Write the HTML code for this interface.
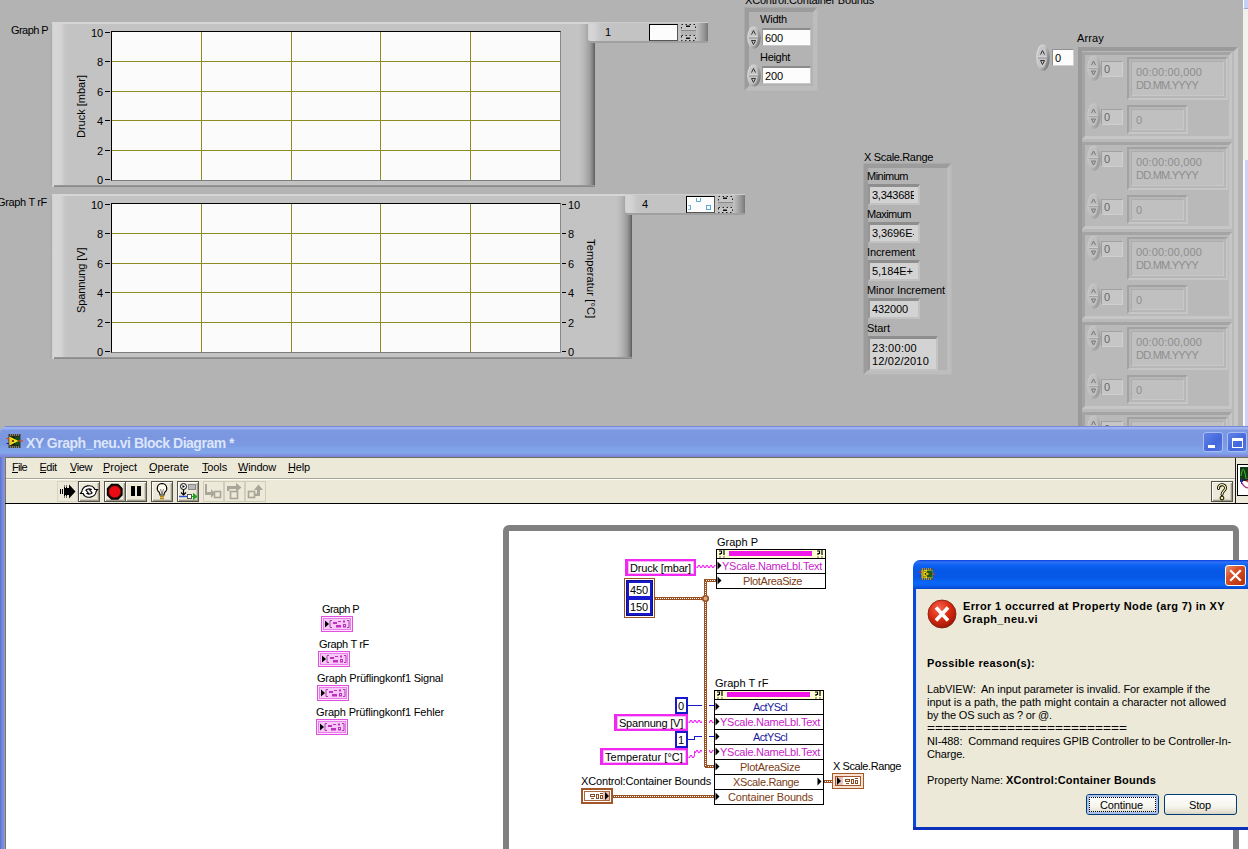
<!DOCTYPE html>
<html><head><meta charset="utf-8"><title>XY Graph_neu.vi</title>
<style>
html,body{margin:0;padding:0}
body{width:1248px;height:849px;overflow:hidden;background:#b3b3b3;position:relative;font-family:"Liberation Sans",sans-serif;font-size:11px}
div{position:absolute;box-sizing:border-box}
svg{position:absolute;overflow:visible}
.t{white-space:pre}

.gframe{background:linear-gradient(90deg,#d0d0d0 0,#d6d6d6 2px,#d4d4d4 9px,#c6c6c6 13px,#c3c3c3 16px,#c3c3c3 calc(100% - 16px),#b8b8b8 calc(100% - 11px),#9c9c9c calc(100% - 5px),#7c7c7c calc(100% - 2px),#5a5a5a 100%)}
.gframe:before{content:"";position:absolute;left:0;right:0;top:0;height:2px;background:#d6d6d6}
.gframe:after{content:"";position:absolute;left:2px;right:0;bottom:0;height:2px;background:linear-gradient(180deg,#9c9c9c,#848484)}
.plot{background:#fbfbfb;border-left:1px solid #000;border-top:1px solid #000;border-right:1px solid #8a8a8a;border-bottom:1px solid #7c7c7c}
.gl{background:#8c8c22}
.leg{background:linear-gradient(90deg,#cfcfcf 0,#d6d6d6 2px,#d2d2d2 7px,#c6c6c6 12px,#c3c3c3 16px,#c3c3c3 calc(100% - 12px),#b4b4b4 calc(100% - 9px),#909090 calc(100% - 3px),#777 100%);border-top:1px solid #cecece;border-bottom:2px solid #a0a0a0;border-radius:0 0 0 3px}

.tbar{background:linear-gradient(180deg,#7888d4 0,#7888d4 1px,#9db4f4 1px,#9bb2f0 3px,#7d99e2 4px,#7a96df 14px,#7c9ae2 19px,#80a4e8 24px,#82a6ea 27px,#7f8fe0 29px,#7a86d8 31px);border-radius:7px 0 0 0}
.tbtn{border:1px solid #55534a;background:#ece9d8;box-shadow:inset 1px 1px 0 #fff,inset -1px -1px 0 #9d9a8c,inset -2px -2px 0 #d2cfc0}
.tbtn.dis{border-color:#d0cdbc;box-shadow:none}
.tbtn.flat{border-color:#d6d3c2;box-shadow:none}
.mn{font-size:11px;line-height:11px}
.mn u{text-decoration:none;border-bottom:1px solid #000}

.dlgtitle{background:linear-gradient(180deg,#0a3ce0 0,#2f72f4 2px,#0f62f4 5px,#0658e6 10px,#0557e6 17px,#0a68f8 23px,#0a5eec 26px,#0444cc 29px);border-radius:7px 0 0 0}
.xpbtn{border:1px solid #003c74;border-radius:3px;background:linear-gradient(180deg,#fff 0,#f6f5ee 60%,#e3dfd0 90%,#d6d0c5 100%)}
</style></head>
<body>
<div style="left:50px;top:24px;width:2px;height:162px;background:linear-gradient(90deg,#b0b0b0,#a9a9a9)"></div>
<div class="gframe" style="left:52px;top:22px;width:543px;height:165px;"></div>
<div class="plot" style="left:111px;top:31px;width:450px;height:150px;"></div>
<div class="gl" style="left:112px;top:61px;width:448px;height:1px;"></div>
<div class="gl" style="left:112px;top:91px;width:448px;height:1px;"></div>
<div class="gl" style="left:112px;top:120px;width:448px;height:1px;"></div>
<div class="gl" style="left:112px;top:150px;width:448px;height:1px;"></div>
<div class="gl" style="left:201px;top:32px;width:1px;height:148px;"></div>
<div class="gl" style="left:291px;top:32px;width:1px;height:148px;"></div>
<div class="gl" style="left:380px;top:32px;width:1px;height:148px;"></div>
<div class="gl" style="left:470px;top:32px;width:1px;height:148px;"></div>
<div style="left:105px;top:32px;width:5px;height:1px;background:#000;"></div>
<div class="t" style="right:1145px;top:27.5px;font-size:11px;line-height:11px;color:#000;letter-spacing:-0.125px;">10</div>
<div style="left:105px;top:61px;width:5px;height:1px;background:#000;"></div>
<div class="t" style="right:1145px;top:56.5px;font-size:11px;line-height:11px;color:#000;letter-spacing:-0.125px;">8</div>
<div style="left:105px;top:91px;width:5px;height:1px;background:#000;"></div>
<div class="t" style="right:1145px;top:86.5px;font-size:11px;line-height:11px;color:#000;letter-spacing:-0.125px;">6</div>
<div style="left:105px;top:120px;width:5px;height:1px;background:#000;"></div>
<div class="t" style="right:1145px;top:115.5px;font-size:11px;line-height:11px;color:#000;letter-spacing:-0.125px;">4</div>
<div style="left:105px;top:150px;width:5px;height:1px;background:#000;"></div>
<div class="t" style="right:1145px;top:145.5px;font-size:11px;line-height:11px;color:#000;letter-spacing:-0.125px;">2</div>
<div style="left:105px;top:179px;width:5px;height:1px;background:#000;"></div>
<div class="t" style="right:1145px;top:174.5px;font-size:11px;line-height:11px;color:#000;letter-spacing:-0.125px;">0</div>
<div style="left:50px;top:196px;width:2px;height:162px;background:linear-gradient(90deg,#b0b0b0,#a9a9a9)"></div>
<div class="gframe" style="left:52px;top:194px;width:580px;height:165px;"></div>
<div class="plot" style="left:111px;top:203px;width:450px;height:150px;"></div>
<div class="gl" style="left:112px;top:233px;width:448px;height:1px;"></div>
<div class="gl" style="left:112px;top:263px;width:448px;height:1px;"></div>
<div class="gl" style="left:112px;top:292px;width:448px;height:1px;"></div>
<div class="gl" style="left:112px;top:322px;width:448px;height:1px;"></div>
<div class="gl" style="left:201px;top:204px;width:1px;height:148px;"></div>
<div class="gl" style="left:291px;top:204px;width:1px;height:148px;"></div>
<div class="gl" style="left:380px;top:204px;width:1px;height:148px;"></div>
<div class="gl" style="left:470px;top:204px;width:1px;height:148px;"></div>
<div style="left:105px;top:204px;width:5px;height:1px;background:#000;"></div>
<div class="t" style="right:1145px;top:199.5px;font-size:11px;line-height:11px;color:#000;letter-spacing:-0.125px;">10</div>
<div style="left:562px;top:204px;width:4px;height:1px;background:#000;"></div>
<div class="t" style="left:568px;top:199.5px;font-size:11px;line-height:11px;color:#000;letter-spacing:-0.125px;">10</div>
<div style="left:105px;top:233px;width:5px;height:1px;background:#000;"></div>
<div class="t" style="right:1145px;top:228.5px;font-size:11px;line-height:11px;color:#000;letter-spacing:-0.125px;">8</div>
<div style="left:562px;top:233px;width:4px;height:1px;background:#000;"></div>
<div class="t" style="left:568px;top:228.5px;font-size:11px;line-height:11px;color:#000;letter-spacing:-0.125px;">8</div>
<div style="left:105px;top:263px;width:5px;height:1px;background:#000;"></div>
<div class="t" style="right:1145px;top:258.5px;font-size:11px;line-height:11px;color:#000;letter-spacing:-0.125px;">6</div>
<div style="left:562px;top:263px;width:4px;height:1px;background:#000;"></div>
<div class="t" style="left:568px;top:258.5px;font-size:11px;line-height:11px;color:#000;letter-spacing:-0.125px;">6</div>
<div style="left:105px;top:292px;width:5px;height:1px;background:#000;"></div>
<div class="t" style="right:1145px;top:287.5px;font-size:11px;line-height:11px;color:#000;letter-spacing:-0.125px;">4</div>
<div style="left:562px;top:292px;width:4px;height:1px;background:#000;"></div>
<div class="t" style="left:568px;top:287.5px;font-size:11px;line-height:11px;color:#000;letter-spacing:-0.125px;">4</div>
<div style="left:105px;top:322px;width:5px;height:1px;background:#000;"></div>
<div class="t" style="right:1145px;top:317.5px;font-size:11px;line-height:11px;color:#000;letter-spacing:-0.125px;">2</div>
<div style="left:562px;top:322px;width:4px;height:1px;background:#000;"></div>
<div class="t" style="left:568px;top:317.5px;font-size:11px;line-height:11px;color:#000;letter-spacing:-0.125px;">2</div>
<div style="left:105px;top:351px;width:5px;height:1px;background:#000;"></div>
<div class="t" style="right:1145px;top:346.5px;font-size:11px;line-height:11px;color:#000;letter-spacing:-0.125px;">0</div>
<div style="left:562px;top:351px;width:4px;height:1px;background:#000;"></div>
<div class="t" style="left:568px;top:346.5px;font-size:11px;line-height:11px;color:#000;letter-spacing:-0.125px;">0</div>
<div class="t" style="left:11px;top:24.5px;font-size:11px;line-height:11px;color:#000;letter-spacing:-0.567px;">Graph P</div>
<div class="t" style="left:-3px;top:196.5px;font-size:11px;line-height:11px;color:#000;letter-spacing:-0.339px;">Graph T rF</div>
<div class="t" style="left:76px;top:138px;font-size:11px;line-height:11px;transform-origin:0 0;transform:rotate(-90deg)">Druck [mbar]</div>
<div class="t" style="left:75.5px;top:313px;font-size:11px;line-height:11px;letter-spacing:-.1px;transform-origin:0 0;transform:rotate(-90deg)">Spannung [V]</div>
<div class="t" style="left:596px;top:239px;font-size:11px;line-height:11px;letter-spacing:.15px;transform-origin:0 0;transform:rotate(90deg)">Temperatur [°C]</div>
<div class="leg" style="left:588px;top:22px;width:120px;height:21px;"></div>
<div class="t" style="left:605px;top:27.0px;font-size:11px;line-height:11px;color:#000;letter-spacing:-1.000px;">1</div>
<div style="left:649px;top:24px;width:29px;height:17px;background:#fcfcfc;border:1px solid #000;border-right-color:#555;border-bottom-color:#555"></div>
<svg style="left:680px;top:24px" width="17" height="17"><rect x="1.500" y=".5" width="14" height="6" fill="#c6c6c6" stroke="#222" stroke-dasharray="1.500 2.500" stroke-width="1"/><rect x="1.500" y="11.500" width="14" height="5" fill="#c6c6c6" stroke="#222" stroke-dasharray="1.500 2.500" stroke-width="1"/><rect x="6" y="1.500" width="4" height="1.500" fill="#111"/><rect x="6" y="13.500" width="4" height="1.500" fill="#111"/><rect x="1" y="7" width="15" height="4" fill="#b4b4b4"/><rect x="1" y="6" width="15" height="1" fill="#8a8a8a"/></svg>
<div class="leg" style="left:625px;top:194px;width:120px;height:21px;"></div>
<div class="t" style="left:642px;top:199.0px;font-size:11px;line-height:11px;color:#000;letter-spacing:-1.000px;">4</div>
<div style="left:686px;top:196px;width:29px;height:17px;background:#fcfcfc;border:1px solid #000;border-right-color:#555;border-bottom-color:#555"></div>
<svg style="left:686px;top:196px" width="29" height="17"><g fill="none" stroke="#5aa9d6" stroke-width="1"><path d="M10.500 2v3.500h4v-3.500"/><path d="M2.500 9.500h2v4h-2"/><rect x="20.500" y="9.500" width="4" height="4"/></g></svg>
<svg style="left:717px;top:196px" width="17" height="17"><rect x="1.500" y=".5" width="14" height="6" fill="#c6c6c6" stroke="#222" stroke-dasharray="1.500 2.500" stroke-width="1"/><rect x="1.500" y="11.500" width="14" height="5" fill="#c6c6c6" stroke="#222" stroke-dasharray="1.500 2.500" stroke-width="1"/><rect x="6" y="1.500" width="4" height="1.500" fill="#111"/><rect x="6" y="13.500" width="4" height="1.500" fill="#111"/><rect x="1" y="7" width="15" height="4" fill="#b4b4b4"/><rect x="1" y="6" width="15" height="1" fill="#8a8a8a"/></svg>
<div style="left:1243px;top:0px;width:5px;height:160px;background:#f1f1ed;"></div>
<div style="left:1243px;top:0px;width:5px;height:9px;background:#c3d0f9;border-left:1px solid #fff;border-bottom:1px solid #9aa8dc;border-radius:0 0 0 2px"></div>
<div style="left:1243px;top:160px;width:5px;height:270px;background:linear-gradient(90deg,#fafaff 0,#fafaff 2px,#cdd1f5 2px)"></div>
<div class="t" style="left:745px;top:-5.5px;font-size:11px;line-height:11px;color:#000;letter-spacing:-0.197px;">XControl:Container Bounds</div>
<div style="left:744px;top:7px;width:74px;height:84px;background:#b3b3b3;border:5px solid;border-color:#9c9c9c #bdbdbd #bdbdbd #9c9c9c"></div>
<div style="left:744px;top:7px;width:74px;height:84px;border:1px solid;border-color:#a8a8a8 #b8b8b8 #b8b8b8 #a8a8a8"></div>
<div class="t" style="left:760px;top:13.5px;font-size:11px;line-height:11px;color:#000;letter-spacing:-0.225px;">Width</div>
<div class="t" style="left:760px;top:51.5px;font-size:11px;line-height:11px;color:#000;letter-spacing:-0.299px;">Height</div>
<svg style="left:747px;top:26px;" width="14" height="23" viewBox="0 0 14 23"><defs><linearGradient id="sg80" x1="0" x2="1" y1="0.200" y2="0.800"><stop offset="0" stop-color="#e2e2e2"/><stop offset=".45" stop-color="#c2c2c2"/><stop offset="1" stop-color="#6c6c6c"/></linearGradient></defs><ellipse cx="7" cy="11.5" rx="6.800" ry="11.3" fill="url(#sg80)"/><ellipse cx="6.200" cy="11.1" rx="4.600" ry="8.9" fill="#c6c6c6"/><path d="M2 11.0h9" stroke="#e0e0e0"/><path d="M2 12.0h9" stroke="#8e8e8e"/><path d="M4.500 8.5l2-4 2 4M4.500 14.5h4l-2 4z" fill="none" stroke="#333" stroke-width="1"/></svg>
<div style="left:762px;top:28px;width:49px;height:18px;border:1px solid;border-color:#8c8c8c #c8c8c8 #c8c8c8 #9a9a9a;border-top-width:2px"></div>
<div style="left:763px;top:30px;width:47px;height:15px;background:#fcfcfc;"></div>
<div class="t" style="left:765px;top:32.5px;font-size:11px;line-height:11px;color:#000;letter-spacing:-0.120px;">600</div>
<svg style="left:747px;top:64px;" width="14" height="23" viewBox="0 0 14 23"><defs><linearGradient id="sg84" x1="0" x2="1" y1="0.200" y2="0.800"><stop offset="0" stop-color="#e2e2e2"/><stop offset=".45" stop-color="#c2c2c2"/><stop offset="1" stop-color="#6c6c6c"/></linearGradient></defs><ellipse cx="7" cy="11.5" rx="6.800" ry="11.3" fill="url(#sg84)"/><ellipse cx="6.200" cy="11.1" rx="4.600" ry="8.9" fill="#c6c6c6"/><path d="M2 11.0h9" stroke="#e0e0e0"/><path d="M2 12.0h9" stroke="#8e8e8e"/><path d="M4.500 8.5l2-4 2 4M4.500 14.5h4l-2 4z" fill="none" stroke="#333" stroke-width="1"/></svg>
<div style="left:762px;top:66px;width:49px;height:18px;border:1px solid;border-color:#8c8c8c #c8c8c8 #c8c8c8 #9a9a9a;border-top-width:2px"></div>
<div style="left:763px;top:68px;width:47px;height:15px;background:#fcfcfc;"></div>
<div class="t" style="left:765px;top:70.5px;font-size:11px;line-height:11px;color:#000;letter-spacing:-0.120px;">200</div>
<div style="left:863px;top:163px;width:89px;height:212px;background:#b3b3b3;border:5px solid;border-color:#9c9c9c #bdbdbd #bdbdbd #9c9c9c"></div>
<div style="left:863px;top:163px;width:89px;height:212px;border:1px solid;border-color:#a8a8a8 #b8b8b8 #b8b8b8 #a8a8a8"></div>
<div class="t" style="left:864px;top:151.5px;font-size:11px;line-height:11px;color:#000;letter-spacing:-0.338px;">X Scale.Range</div>
<div class="t" style="left:867px;top:170.5px;font-size:11px;line-height:11px;color:#000;letter-spacing:-0.518px;">Minimum</div>
<div style="left:868px;top:184px;width:52px;height:21px;background:#d3d3d3;border:2px solid;border-color:#8e8e8e #c2c2c2 #c2c2c2 #969696;border-top-width:3px"></div>
<div class="t" style="left:872px;top:189.5px;font-size:11px;line-height:11px;color:#000;letter-spacing:-0.264px;width:42px;overflow:hidden;">3,34368E</div>
<div class="t" style="left:867px;top:208.5px;font-size:11px;line-height:11px;color:#000;letter-spacing:-0.525px;">Maximum</div>
<div style="left:868px;top:222px;width:52px;height:21px;background:#d3d3d3;border:2px solid;border-color:#8e8e8e #c2c2c2 #c2c2c2 #969696;border-top-width:3px"></div>
<div class="t" style="left:872px;top:227.5px;font-size:11px;line-height:11px;color:#000;letter-spacing:-0.082px;width:42px;overflow:hidden;">3,3696E-</div>
<div class="t" style="left:867px;top:246.5px;font-size:11px;line-height:11px;color:#000;letter-spacing:-0.102px;">Increment</div>
<div style="left:868px;top:260px;width:52px;height:21px;background:#d3d3d3;border:2px solid;border-color:#8e8e8e #c2c2c2 #c2c2c2 #969696;border-top-width:3px"></div>
<div class="t" style="left:872px;top:265.5px;font-size:11px;line-height:11px;color:#000;letter-spacing:-0.042px;width:42px;overflow:hidden;">5,184E+</div>
<div class="t" style="left:867px;top:284.5px;font-size:11px;line-height:11px;color:#000;letter-spacing:-0.099px;">Minor Increment</div>
<div style="left:868px;top:298px;width:52px;height:21px;background:#d3d3d3;border:2px solid;border-color:#8e8e8e #c2c2c2 #c2c2c2 #969696;border-top-width:3px"></div>
<div class="t" style="left:872px;top:303.5px;font-size:11px;line-height:11px;color:#000;letter-spacing:-0.120px;width:42px;overflow:hidden;">432000</div>
<div class="t" style="left:867px;top:322.5px;font-size:11px;line-height:11px;color:#000;letter-spacing:-0.047px;">Start</div>
<div style="left:868px;top:336px;width:70px;height:35px;background:#d3d3d3;border:2px solid;border-color:#8e8e8e #c2c2c2 #c2c2c2 #969696;border-top-width:3px"></div>
<div class="t" style="left:872px;top:342.5px;font-size:11px;line-height:11px;color:#000;letter-spacing:0.271px;">23:00:00</div>
<div class="t" style="left:872px;top:355.5px;font-size:11px;line-height:11px;color:#000;letter-spacing:0.194px;">12/02/2010</div>
<div class="t" style="left:1077px;top:32.5px;font-size:11px;line-height:11px;color:#000;letter-spacing:0.144px;">Array</div>
<svg style="left:1036px;top:44px;" width="14" height="27" viewBox="0 0 14 27"><defs><linearGradient id="sg108" x1="0" x2="1" y1="0.200" y2="0.800"><stop offset="0" stop-color="#e2e2e2"/><stop offset=".45" stop-color="#c2c2c2"/><stop offset="1" stop-color="#6c6c6c"/></linearGradient></defs><ellipse cx="7" cy="13.5" rx="6.800" ry="13.3" fill="url(#sg108)"/><ellipse cx="6.200" cy="13.1" rx="4.600" ry="10.9" fill="#c6c6c6"/><path d="M2 13.0h9" stroke="#e0e0e0"/><path d="M2 14.0h9" stroke="#8e8e8e"/><path d="M4.500 10.5l2-4 2 4M4.500 16.5h4l-2 4z" fill="none" stroke="#333" stroke-width="1"/></svg>
<div style="left:1052px;top:49px;width:22px;height:17px;border:1px solid;border-color:#909090 #d0d0d0 #d0d0d0 #909090"></div>
<div style="left:1053px;top:50px;width:20px;height:15px;background:#fcfcfc;"></div>
<div class="t" style="left:1055px;top:52.5px;font-size:11px;line-height:11px;color:#000;letter-spacing:-0.125px;">0</div>
<div style="left:1078px;top:47px;width:160px;height:383px;background:#b9b9b9;border:4px solid;border-color:#9a9a9a #c6c6c6 #c6c6c6 #9a9a9a;border-bottom:none"></div>
<div style="left:1082px;top:52px;width:150px;height:87px;background:#b9b9b9;border:3px solid;border-color:#a4a4a4 #c6c6c6 #c6c6c6 #a4a4a4;"></div>
<div style="left:0;top:0;width:1248px;height:430px;overflow:hidden;clip-path:inset(0 0 0 0)">
<svg style="left:1087px;top:55px;opacity:.5;" width="14" height="26" viewBox="0 0 14 26"><defs><linearGradient id="sg115" x1="0" x2="1" y1="0.200" y2="0.800"><stop offset="0" stop-color="#e2e2e2"/><stop offset=".45" stop-color="#c2c2c2"/><stop offset="1" stop-color="#6c6c6c"/></linearGradient></defs><ellipse cx="7" cy="13.0" rx="6.800" ry="12.8" fill="url(#sg115)"/><ellipse cx="6.200" cy="12.6" rx="4.600" ry="10.4" fill="#c6c6c6"/><path d="M2 12.5h9" stroke="#e0e0e0"/><path d="M2 13.5h9" stroke="#8e8e8e"/><path d="M4.500 10.0l2-4 2 4M4.500 16.0h4l-2 4z" fill="none" stroke="#333" stroke-width="1"/></svg>
<div style="left:1101px;top:61px;width:22px;height:16px;background:#c6c6c6;border:1px solid;border-color:#a0a0a0 #cfcfcf #cfcfcf #a0a0a0"></div>
<div class="t" style="left:1104px;top:63.5px;font-size:11px;line-height:11px;color:#666;letter-spacing:-0.125px;">0</div>
<div style="left:1127px;top:57px;width:101px;height:43px;background:#b7b7b7;border:2px solid;border-color:#a2a2a2 #c6c6c6 #c6c6c6 #a2a2a2"></div>
<div style="left:1131px;top:61px;width:93px;height:35px;background:#c0c0c0;border:1px solid;border-color:#adadad #c8c8c8 #c8c8c8 #adadad"></div>
<div class="t" style="left:1136px;top:66.5px;font-size:11px;line-height:11px;color:#8e8e8e;letter-spacing:0.147px;">00:00:00,000</div>
<div class="t" style="left:1136px;top:79.5px;font-size:11px;line-height:11px;color:#8e8e8e;letter-spacing:-0.769px;">DD.MM.YYYY</div>
<svg style="left:1087px;top:103px;opacity:.5;" width="14" height="26" viewBox="0 0 14 26"><defs><linearGradient id="sg122" x1="0" x2="1" y1="0.200" y2="0.800"><stop offset="0" stop-color="#e2e2e2"/><stop offset=".45" stop-color="#c2c2c2"/><stop offset="1" stop-color="#6c6c6c"/></linearGradient></defs><ellipse cx="7" cy="13.0" rx="6.800" ry="12.8" fill="url(#sg122)"/><ellipse cx="6.200" cy="12.6" rx="4.600" ry="10.4" fill="#c6c6c6"/><path d="M2 12.5h9" stroke="#e0e0e0"/><path d="M2 13.5h9" stroke="#8e8e8e"/><path d="M4.500 10.0l2-4 2 4M4.500 16.0h4l-2 4z" fill="none" stroke="#333" stroke-width="1"/></svg>
<div style="left:1101px;top:109px;width:22px;height:16px;background:#c6c6c6;border:1px solid;border-color:#a0a0a0 #cfcfcf #cfcfcf #a0a0a0"></div>
<div class="t" style="left:1104px;top:111.5px;font-size:11px;line-height:11px;color:#666;letter-spacing:-0.125px;">0</div>
<div style="left:1127px;top:105px;width:61px;height:29px;background:#b7b7b7;border:2px solid;border-color:#a2a2a2 #c6c6c6 #c6c6c6 #a2a2a2"></div>
<div style="left:1131px;top:109px;width:53px;height:21px;background:#c0c0c0;border:1px solid;border-color:#adadad #c8c8c8 #c8c8c8 #adadad"></div>
<div class="t" style="left:1136px;top:114.5px;font-size:11px;line-height:11px;color:#8e8e8e;letter-spacing:-0.125px;">0</div>
</div>
<div style="left:1082px;top:142px;width:150px;height:87px;background:#b9b9b9;border:3px solid;border-color:#a4a4a4 #c6c6c6 #c6c6c6 #a4a4a4;"></div>
<div style="left:0;top:0;width:1248px;height:430px;overflow:hidden;clip-path:inset(0 0 0 0)">
<svg style="left:1087px;top:145px;opacity:.5;" width="14" height="26" viewBox="0 0 14 26"><defs><linearGradient id="sg131" x1="0" x2="1" y1="0.200" y2="0.800"><stop offset="0" stop-color="#e2e2e2"/><stop offset=".45" stop-color="#c2c2c2"/><stop offset="1" stop-color="#6c6c6c"/></linearGradient></defs><ellipse cx="7" cy="13.0" rx="6.800" ry="12.8" fill="url(#sg131)"/><ellipse cx="6.200" cy="12.6" rx="4.600" ry="10.4" fill="#c6c6c6"/><path d="M2 12.5h9" stroke="#e0e0e0"/><path d="M2 13.5h9" stroke="#8e8e8e"/><path d="M4.500 10.0l2-4 2 4M4.500 16.0h4l-2 4z" fill="none" stroke="#333" stroke-width="1"/></svg>
<div style="left:1101px;top:151px;width:22px;height:16px;background:#c6c6c6;border:1px solid;border-color:#a0a0a0 #cfcfcf #cfcfcf #a0a0a0"></div>
<div class="t" style="left:1104px;top:153.5px;font-size:11px;line-height:11px;color:#666;letter-spacing:-0.125px;">0</div>
<div style="left:1127px;top:147px;width:101px;height:43px;background:#b7b7b7;border:2px solid;border-color:#a2a2a2 #c6c6c6 #c6c6c6 #a2a2a2"></div>
<div style="left:1131px;top:151px;width:93px;height:35px;background:#c0c0c0;border:1px solid;border-color:#adadad #c8c8c8 #c8c8c8 #adadad"></div>
<div class="t" style="left:1136px;top:156.5px;font-size:11px;line-height:11px;color:#8e8e8e;letter-spacing:0.147px;">00:00:00,000</div>
<div class="t" style="left:1136px;top:169.5px;font-size:11px;line-height:11px;color:#8e8e8e;letter-spacing:-0.769px;">DD.MM.YYYY</div>
<svg style="left:1087px;top:193px;opacity:.5;" width="14" height="26" viewBox="0 0 14 26"><defs><linearGradient id="sg138" x1="0" x2="1" y1="0.200" y2="0.800"><stop offset="0" stop-color="#e2e2e2"/><stop offset=".45" stop-color="#c2c2c2"/><stop offset="1" stop-color="#6c6c6c"/></linearGradient></defs><ellipse cx="7" cy="13.0" rx="6.800" ry="12.8" fill="url(#sg138)"/><ellipse cx="6.200" cy="12.6" rx="4.600" ry="10.4" fill="#c6c6c6"/><path d="M2 12.5h9" stroke="#e0e0e0"/><path d="M2 13.5h9" stroke="#8e8e8e"/><path d="M4.500 10.0l2-4 2 4M4.500 16.0h4l-2 4z" fill="none" stroke="#333" stroke-width="1"/></svg>
<div style="left:1101px;top:199px;width:22px;height:16px;background:#c6c6c6;border:1px solid;border-color:#a0a0a0 #cfcfcf #cfcfcf #a0a0a0"></div>
<div class="t" style="left:1104px;top:201.5px;font-size:11px;line-height:11px;color:#666;letter-spacing:-0.125px;">0</div>
<div style="left:1127px;top:195px;width:61px;height:29px;background:#b7b7b7;border:2px solid;border-color:#a2a2a2 #c6c6c6 #c6c6c6 #a2a2a2"></div>
<div style="left:1131px;top:199px;width:53px;height:21px;background:#c0c0c0;border:1px solid;border-color:#adadad #c8c8c8 #c8c8c8 #adadad"></div>
<div class="t" style="left:1136px;top:204.5px;font-size:11px;line-height:11px;color:#8e8e8e;letter-spacing:-0.125px;">0</div>
</div>
<div style="left:1082px;top:232px;width:150px;height:87px;background:#b9b9b9;border:3px solid;border-color:#a4a4a4 #c6c6c6 #c6c6c6 #a4a4a4;"></div>
<div style="left:0;top:0;width:1248px;height:430px;overflow:hidden;clip-path:inset(0 0 0 0)">
<svg style="left:1087px;top:235px;opacity:.5;" width="14" height="26" viewBox="0 0 14 26"><defs><linearGradient id="sg147" x1="0" x2="1" y1="0.200" y2="0.800"><stop offset="0" stop-color="#e2e2e2"/><stop offset=".45" stop-color="#c2c2c2"/><stop offset="1" stop-color="#6c6c6c"/></linearGradient></defs><ellipse cx="7" cy="13.0" rx="6.800" ry="12.8" fill="url(#sg147)"/><ellipse cx="6.200" cy="12.6" rx="4.600" ry="10.4" fill="#c6c6c6"/><path d="M2 12.5h9" stroke="#e0e0e0"/><path d="M2 13.5h9" stroke="#8e8e8e"/><path d="M4.500 10.0l2-4 2 4M4.500 16.0h4l-2 4z" fill="none" stroke="#333" stroke-width="1"/></svg>
<div style="left:1101px;top:241px;width:22px;height:16px;background:#c6c6c6;border:1px solid;border-color:#a0a0a0 #cfcfcf #cfcfcf #a0a0a0"></div>
<div class="t" style="left:1104px;top:243.5px;font-size:11px;line-height:11px;color:#666;letter-spacing:-0.125px;">0</div>
<div style="left:1127px;top:237px;width:101px;height:43px;background:#b7b7b7;border:2px solid;border-color:#a2a2a2 #c6c6c6 #c6c6c6 #a2a2a2"></div>
<div style="left:1131px;top:241px;width:93px;height:35px;background:#c0c0c0;border:1px solid;border-color:#adadad #c8c8c8 #c8c8c8 #adadad"></div>
<div class="t" style="left:1136px;top:246.5px;font-size:11px;line-height:11px;color:#8e8e8e;letter-spacing:0.147px;">00:00:00,000</div>
<div class="t" style="left:1136px;top:259.5px;font-size:11px;line-height:11px;color:#8e8e8e;letter-spacing:-0.769px;">DD.MM.YYYY</div>
<svg style="left:1087px;top:283px;opacity:.5;" width="14" height="26" viewBox="0 0 14 26"><defs><linearGradient id="sg154" x1="0" x2="1" y1="0.200" y2="0.800"><stop offset="0" stop-color="#e2e2e2"/><stop offset=".45" stop-color="#c2c2c2"/><stop offset="1" stop-color="#6c6c6c"/></linearGradient></defs><ellipse cx="7" cy="13.0" rx="6.800" ry="12.8" fill="url(#sg154)"/><ellipse cx="6.200" cy="12.6" rx="4.600" ry="10.4" fill="#c6c6c6"/><path d="M2 12.5h9" stroke="#e0e0e0"/><path d="M2 13.5h9" stroke="#8e8e8e"/><path d="M4.500 10.0l2-4 2 4M4.500 16.0h4l-2 4z" fill="none" stroke="#333" stroke-width="1"/></svg>
<div style="left:1101px;top:289px;width:22px;height:16px;background:#c6c6c6;border:1px solid;border-color:#a0a0a0 #cfcfcf #cfcfcf #a0a0a0"></div>
<div class="t" style="left:1104px;top:291.5px;font-size:11px;line-height:11px;color:#666;letter-spacing:-0.125px;">0</div>
<div style="left:1127px;top:285px;width:61px;height:29px;background:#b7b7b7;border:2px solid;border-color:#a2a2a2 #c6c6c6 #c6c6c6 #a2a2a2"></div>
<div style="left:1131px;top:289px;width:53px;height:21px;background:#c0c0c0;border:1px solid;border-color:#adadad #c8c8c8 #c8c8c8 #adadad"></div>
<div class="t" style="left:1136px;top:294.5px;font-size:11px;line-height:11px;color:#8e8e8e;letter-spacing:-0.125px;">0</div>
</div>
<div style="left:1082px;top:322px;width:150px;height:87px;background:#b9b9b9;border:3px solid;border-color:#a4a4a4 #c6c6c6 #c6c6c6 #a4a4a4;"></div>
<div style="left:0;top:0;width:1248px;height:430px;overflow:hidden;clip-path:inset(0 0 0 0)">
<svg style="left:1087px;top:325px;opacity:.5;" width="14" height="26" viewBox="0 0 14 26"><defs><linearGradient id="sg163" x1="0" x2="1" y1="0.200" y2="0.800"><stop offset="0" stop-color="#e2e2e2"/><stop offset=".45" stop-color="#c2c2c2"/><stop offset="1" stop-color="#6c6c6c"/></linearGradient></defs><ellipse cx="7" cy="13.0" rx="6.800" ry="12.8" fill="url(#sg163)"/><ellipse cx="6.200" cy="12.6" rx="4.600" ry="10.4" fill="#c6c6c6"/><path d="M2 12.5h9" stroke="#e0e0e0"/><path d="M2 13.5h9" stroke="#8e8e8e"/><path d="M4.500 10.0l2-4 2 4M4.500 16.0h4l-2 4z" fill="none" stroke="#333" stroke-width="1"/></svg>
<div style="left:1101px;top:331px;width:22px;height:16px;background:#c6c6c6;border:1px solid;border-color:#a0a0a0 #cfcfcf #cfcfcf #a0a0a0"></div>
<div class="t" style="left:1104px;top:333.5px;font-size:11px;line-height:11px;color:#666;letter-spacing:-0.125px;">0</div>
<div style="left:1127px;top:327px;width:101px;height:43px;background:#b7b7b7;border:2px solid;border-color:#a2a2a2 #c6c6c6 #c6c6c6 #a2a2a2"></div>
<div style="left:1131px;top:331px;width:93px;height:35px;background:#c0c0c0;border:1px solid;border-color:#adadad #c8c8c8 #c8c8c8 #adadad"></div>
<div class="t" style="left:1136px;top:336.5px;font-size:11px;line-height:11px;color:#8e8e8e;letter-spacing:0.147px;">00:00:00,000</div>
<div class="t" style="left:1136px;top:349.5px;font-size:11px;line-height:11px;color:#8e8e8e;letter-spacing:-0.769px;">DD.MM.YYYY</div>
<svg style="left:1087px;top:373px;opacity:.5;" width="14" height="26" viewBox="0 0 14 26"><defs><linearGradient id="sg170" x1="0" x2="1" y1="0.200" y2="0.800"><stop offset="0" stop-color="#e2e2e2"/><stop offset=".45" stop-color="#c2c2c2"/><stop offset="1" stop-color="#6c6c6c"/></linearGradient></defs><ellipse cx="7" cy="13.0" rx="6.800" ry="12.8" fill="url(#sg170)"/><ellipse cx="6.200" cy="12.6" rx="4.600" ry="10.4" fill="#c6c6c6"/><path d="M2 12.5h9" stroke="#e0e0e0"/><path d="M2 13.5h9" stroke="#8e8e8e"/><path d="M4.500 10.0l2-4 2 4M4.500 16.0h4l-2 4z" fill="none" stroke="#333" stroke-width="1"/></svg>
<div style="left:1101px;top:379px;width:22px;height:16px;background:#c6c6c6;border:1px solid;border-color:#a0a0a0 #cfcfcf #cfcfcf #a0a0a0"></div>
<div class="t" style="left:1104px;top:381.5px;font-size:11px;line-height:11px;color:#666;letter-spacing:-0.125px;">0</div>
<div style="left:1127px;top:375px;width:61px;height:29px;background:#b7b7b7;border:2px solid;border-color:#a2a2a2 #c6c6c6 #c6c6c6 #a2a2a2"></div>
<div style="left:1131px;top:379px;width:53px;height:21px;background:#c0c0c0;border:1px solid;border-color:#adadad #c8c8c8 #c8c8c8 #adadad"></div>
<div class="t" style="left:1136px;top:384.5px;font-size:11px;line-height:11px;color:#8e8e8e;letter-spacing:-0.125px;">0</div>
</div>
<div style="left:1082px;top:412px;width:150px;height:18px;background:#b9b9b9;border:3px solid;border-color:#a4a4a4 #c6c6c6 #c6c6c6 #a4a4a4;border-bottom:none;"></div>
<div style="left:0;top:0;width:1248px;height:430px;overflow:hidden;clip-path:inset(0 0 0 0)">
<svg style="left:1087px;top:415px;opacity:.5;" width="14" height="26" viewBox="0 0 14 26"><defs><linearGradient id="sg179" x1="0" x2="1" y1="0.200" y2="0.800"><stop offset="0" stop-color="#e2e2e2"/><stop offset=".45" stop-color="#c2c2c2"/><stop offset="1" stop-color="#6c6c6c"/></linearGradient></defs><ellipse cx="7" cy="13.0" rx="6.800" ry="12.8" fill="url(#sg179)"/><ellipse cx="6.200" cy="12.6" rx="4.600" ry="10.4" fill="#c6c6c6"/><path d="M2 12.5h9" stroke="#e0e0e0"/><path d="M2 13.5h9" stroke="#8e8e8e"/><path d="M4.500 10.0l2-4 2 4M4.500 16.0h4l-2 4z" fill="none" stroke="#333" stroke-width="1"/></svg>
<div style="left:1101px;top:421px;width:22px;height:16px;background:#c6c6c6;border:1px solid;border-color:#a0a0a0 #cfcfcf #cfcfcf #a0a0a0"></div>
<div class="t" style="left:1104px;top:423.5px;font-size:11px;line-height:11px;color:#666;letter-spacing:-0.125px;">0</div>
<div style="left:1127px;top:417px;width:101px;height:43px;background:#b7b7b7;border:2px solid;border-color:#a2a2a2 #c6c6c6 #c6c6c6 #a2a2a2"></div>
<div style="left:1131px;top:421px;width:93px;height:35px;background:#c0c0c0;border:1px solid;border-color:#adadad #c8c8c8 #c8c8c8 #adadad"></div>
<div class="t" style="left:1136px;top:426.5px;font-size:11px;line-height:11px;color:#8e8e8e;letter-spacing:0.147px;">00:00:00,000</div>
<div class="t" style="left:1136px;top:439.5px;font-size:11px;line-height:11px;color:#8e8e8e;letter-spacing:-0.769px;">DD.MM.YYYY</div>
<svg style="left:1087px;top:463px;opacity:.5;" width="14" height="26" viewBox="0 0 14 26"><defs><linearGradient id="sg186" x1="0" x2="1" y1="0.200" y2="0.800"><stop offset="0" stop-color="#e2e2e2"/><stop offset=".45" stop-color="#c2c2c2"/><stop offset="1" stop-color="#6c6c6c"/></linearGradient></defs><ellipse cx="7" cy="13.0" rx="6.800" ry="12.8" fill="url(#sg186)"/><ellipse cx="6.200" cy="12.6" rx="4.600" ry="10.4" fill="#c6c6c6"/><path d="M2 12.5h9" stroke="#e0e0e0"/><path d="M2 13.5h9" stroke="#8e8e8e"/><path d="M4.500 10.0l2-4 2 4M4.500 16.0h4l-2 4z" fill="none" stroke="#333" stroke-width="1"/></svg>
<div style="left:1101px;top:469px;width:22px;height:16px;background:#c6c6c6;border:1px solid;border-color:#a0a0a0 #cfcfcf #cfcfcf #a0a0a0"></div>
<div class="t" style="left:1104px;top:471.5px;font-size:11px;line-height:11px;color:#666;letter-spacing:-0.125px;">0</div>
<div style="left:1127px;top:465px;width:61px;height:29px;background:#b7b7b7;border:2px solid;border-color:#a2a2a2 #c6c6c6 #c6c6c6 #a2a2a2"></div>
<div style="left:1131px;top:469px;width:53px;height:21px;background:#c0c0c0;border:1px solid;border-color:#adadad #c8c8c8 #c8c8c8 #adadad"></div>
<div class="t" style="left:1136px;top:474.5px;font-size:11px;line-height:11px;color:#8e8e8e;letter-spacing:-0.125px;">0</div>
</div>
<div class="tbar" style="left:0px;top:426px;width:1260px;height:31px;"></div>
<div style="left:0px;top:457px;width:5px;height:400px;background:linear-gradient(90deg,#5670ce 0,#7286de 2px,#7f8fe2 4px,#9aa2bc 5px)"></div>
<div style="left:5px;top:457px;width:1243px;height:1px;background:#6c6e58;"></div>
<div style="left:5px;top:458px;width:1243px;height:46px;background:#ece9d8;"></div>
<div style="left:5px;top:457px;width:1px;height:400px;background:#77775f;"></div>
<div style="left:6px;top:478px;width:1229px;height:1px;background:#a8a696;"></div>
<div style="left:6px;top:479px;width:1229px;height:1px;background:#fbfaf4;"></div>
<div style="left:5px;top:503px;width:1243px;height:1px;background:#000;"></div>
<div style="left:6px;top:504px;width:1242px;height:345px;background:#fff;"></div>
<svg style="left:6px;top:433px" width="18" height="16" viewBox="0 0 18 16"><rect x="2.500" y="1" width="12" height="14" fill="#3c3c30"/><rect x="3" y="3.500" width="11" height="9" fill="#0c1c0c"/><path d="M9 4h5v8h-5z" fill="#145014"/><path d="M3.500 3.500l9 4.500-9 4.500z" fill="#f4e01c"/><path d="M3.500 3.500l4 4.500-4 4.500z" fill="#f8c818"/><circle cx="7" cy="8" r="1.100" fill="#3a2a00"/><path d="M.5 5.500h2.500" stroke="#e0302a" stroke-width="1.200"/><path d="M.5 10.500h2.500" stroke="#1a1ad0" stroke-width="1.200"/><path d="M12 8h5" stroke="#d8401c" stroke-width="1.200"/><path d="M4 2h1M6 2h1M8 2h1M10 2h1M12 2h1M4 14h1M6 14h1M8 14h1M10 14h1M12 14h1" stroke="#c8c8b8" stroke-width="1"/></svg>
<div class="t" style="left:26px;top:436.0px;font-size:14px;line-height:14px;color:#dbe5fb;font-weight:bold;letter-spacing:-0.485px;">XY Graph_neu.vi Block Diagram *</div>
<div style="left:1203px;top:432px;width:20px;height:20px;border-radius:3px;border:1px solid #a9bdf2;background:linear-gradient(135deg,#6082e6,#4468dc 60%,#5378e0)"></div>
<div style="left:1208px;top:445px;width:7px;height:3px;background:#fff;"></div>
<div style="left:1227px;top:432px;width:20px;height:20px;border-radius:3px;border:1px solid #a9bdf2;background:linear-gradient(135deg,#6082e6,#4468dc 60%,#5378e0)"></div>
<div style="left:1232px;top:438px;width:11px;height:10px;border:1px solid #fff;border-top-width:3px"></div>
<div class="t" style="left:12px;top:461.5px;font-size:11px;line-height:11px;color:#000;letter-spacing:-0.684px;">File</div>
<div style="left:12px;top:472px;width:6px;height:1px;background:#000;"></div>
<div class="t" style="left:39.5px;top:461.5px;font-size:11px;line-height:11px;color:#000;letter-spacing:-0.492px;">Edit</div>
<div style="left:39.5px;top:472px;width:6px;height:1px;background:#000;"></div>
<div class="t" style="left:70px;top:461.5px;font-size:11px;line-height:11px;color:#000;letter-spacing:-0.414px;">View</div>
<div style="left:70px;top:472px;width:6px;height:1px;background:#000;"></div>
<div class="t" style="left:103px;top:461.5px;font-size:11px;line-height:11px;color:#000;letter-spacing:-0.036px;">Project</div>
<div style="left:103px;top:472px;width:6px;height:1px;background:#000;"></div>
<div class="t" style="left:149px;top:461.5px;font-size:11px;line-height:11px;color:#000;letter-spacing:0.036px;">Operate</div>
<div style="left:149px;top:472px;width:6px;height:1px;background:#000;"></div>
<div class="t" style="left:202px;top:461.5px;font-size:11px;line-height:11px;color:#000;letter-spacing:-0.138px;">Tools</div>
<div style="left:202px;top:472px;width:6px;height:1px;background:#000;"></div>
<div class="t" style="left:238px;top:461.5px;font-size:11px;line-height:11px;color:#000;letter-spacing:-0.188px;">Window</div>
<div style="left:238px;top:472px;width:9px;height:1px;background:#000;"></div>
<div class="t" style="left:288px;top:461.5px;font-size:11px;line-height:11px;color:#000;letter-spacing:-0.156px;">Help</div>
<div style="left:288px;top:472px;width:6px;height:1px;background:#000;"></div>
<div class="tbtn flat" style="left:57px;top:481px;width:21px;height:21px;"></div>
<svg style="left:57px;top:481px" width="21" height="21" viewBox="0 0 21 21"><path d="M7 7h5V3.500l6.500 7-6.500 7V14H7z" fill="#000"/><path d="M3.500 8v5M5.500 8v5" stroke="#000" stroke-width="1"/><path d="M7.500 4.500v2.500M9.500 4.500v2.500M7.500 14v2.500M9.500 14v2.500" stroke="#000" stroke-width="1" stroke-dasharray="1 .5"/></svg>
<div class="tbtn " style="left:78px;top:481px;width:22px;height:21px;"></div>
<svg style="left:78px;top:481px" width="22" height="21" viewBox="0 0 22 21"><g fill="none" stroke-linecap="butt"><path d="M5.500 12C5 5.500 14 4.500 15.500 9" stroke="#000" stroke-width="4.200"/><path d="M16.500 9C17 15.500 8 16.500 6.500 12" stroke="#000" stroke-width="4.200"/></g><path d="M11.500 8.500h8l-4 5z" fill="#fff" stroke="#000" stroke-width="1.100"/><path d="M2.500 12.500h8l-4-5z" fill="#fff" stroke="#000" stroke-width="1.100"/><g fill="none"><path d="M5.500 12C5 5.500 14 4.500 15.500 9.500" stroke="#fff" stroke-width="2"/><path d="M16.500 9C17 15.500 8 16.500 6.500 11.500" stroke="#fff" stroke-width="2"/></g></svg>
<div class="tbtn " style="left:104px;top:481px;width:22px;height:21px;"></div>
<svg style="left:104px;top:481px" width="22" height="21" viewBox="0 0 22 21"><path d="M7.500 3.500h6.500l4 4v6.500l-4 4h-6.500l-4-4V7.500z" fill="#3a1010" stroke="#000" stroke-width="1.300"/><circle cx="10.750" cy="10.750" r="5.700" fill="#ea0a14"/></svg>
<div class="tbtn " style="left:125px;top:481px;width:22px;height:21px;"></div>
<div style="left:131px;top:486px;width:4px;height:10px;background:#000;"></div>
<div style="left:137px;top:486px;width:4px;height:10px;background:#000;"></div>
<div class="tbtn " style="left:151px;top:481px;width:22px;height:21px;"></div>
<svg style="left:151px;top:481px" width="22" height="21" viewBox="0 0 22 21"><path d="M11 2.500a4.800 4.800 0 0 1 3 8.500c-.8.800-1 1.500-1 3h-4c0-1.500-.2-2.200-1-3a4.800 4.800 0 0 1 3-8.500z" fill="#fffef0" stroke="#000" stroke-width="1.100"/><path d="M9 15.500h4M9 17.500h4" stroke="#b8860b" stroke-width="1.300"/><path d="M9.500 8l1.500 5 1.500-5" fill="none" stroke="#444" stroke-width=".7"/></svg>
<div class="tbtn " style="left:177px;top:481px;width:22px;height:21px;"></div>
<svg style="left:177px;top:481px" width="22" height="21" viewBox="0 0 22 21"><circle cx="6.500" cy="5.500" r="3" fill="#fff" stroke="#000"/><path d="M5.500 4l2.500 1.500-2.500 1.500z" fill="#000"/><rect x="11.500" y="3.500" width="7" height="5" fill="#b8b8b8" stroke="#888"/><path d="M6.500 8.500v5M4 11.500l2.500 2.500 2.500-2.500" fill="none" stroke="#000" stroke-width="1.200"/><path d="M2 15.500h9" stroke="#2a50d0" stroke-width="1.400"/><rect x="10.500" y="13.500" width="4" height="4" fill="#fff" stroke="#555"/><path d="M15 15.500h2M16.500 12.500l3.500 3-3.500 3z" fill="#1aa51a" stroke="#1aa51a" stroke-width="1"/></svg>
<div class="tbtn dis" style="left:203px;top:481px;width:21px;height:21px;"></div>
<div class="tbtn dis" style="left:224px;top:481px;width:21px;height:21px;"></div>
<div class="tbtn dis" style="left:245px;top:481px;width:21px;height:21px;"></div>
<svg style="left:203px;top:481px" width="21" height="21" viewBox="0 0 21 21"><path d="M4 3v8h4v-3l4 4.500-4 4.500v-3H2V3z" fill="#a9a699"/><rect x="11.500" y="10.500" width="6" height="6" fill="#ece9d8" stroke="#a9a699" stroke-width="1.600"/></svg>
<svg style="left:224px;top:481px" width="21" height="21" viewBox="0 0 21 21"><path d="M3 10V5h9V2l5.500 4.500L12 11V8H5.500v2z" fill="#a9a699"/><rect x="6.500" y="10.500" width="7" height="7" fill="#ece9d8" stroke="#a9a699" stroke-width="1.600"/></svg>
<svg style="left:245px;top:481px" width="21" height="21" viewBox="0 0 21 21"><rect x="3.500" y="10.500" width="6" height="6" fill="#ece9d8" stroke="#a9a699" stroke-width="1.600"/><path d="M10 15h5V9h3l-4.500-5.500L9 9h3v3.500h-2z" fill="#a9a699"/></svg>
<div class="tbtn" style="left:1211px;top:481px;width:22px;height:21px;"></div>
<svg style="left:1211px;top:481px" width="22" height="21" viewBox="0 0 22 21"><path d="M7.500 7.500c0-5 7-5 7-.5 0 3-3.500 3-3.500 6.500" fill="none" stroke="#000" stroke-width="2.900" stroke-linecap="round"/><path d="M7.500 7.500c0-5 7-5 7-.5 0 3-3.500 3-3.500 6.500" fill="none" stroke="#f6f2a0" stroke-width="1.200" stroke-linecap="round"/><circle cx="11" cy="17" r="1.900" fill="#f6f08a" stroke="#000" stroke-width="1"/></svg>
<div style="left:1235px;top:458px;width:1px;height:45px;background:#1c1c1c;"></div>
<div style="left:1237px;top:464px;width:12px;height:32px;background:#fff;border:1px solid #000;border-right:none"></div>
<div style="left:1240px;top:467px;width:9px;height:12px;background:#123c12;"></div>
<svg style="left:1240px;top:467px" width="9" height="30" viewBox="0 0 9 30"><path d="M1 9c1.500-9 3-9 4.500 0s2.500 2 3.500 0" fill="none" stroke="#3ec43e" stroke-width="1"/><path d="M0 13h9" stroke="#223" stroke-width="2"/><path d="M1 14c2 6 5 7 8 7" fill="none" stroke="#b03070" stroke-width="1.200"/><path d="M5 14l4-1v3z" fill="#e0452a"/><path d="M1.500 12v5M0 14.500h3" stroke="#2233bb" stroke-width="1"/></svg>
<div style="left:503px;top:525px;width:736px;height:340px;border:6px solid #808080;border-radius:6px 6px 0 0"></div>
<div class="t" style="left:322px;top:604.0px;font-size:11px;line-height:11px;color:#000;letter-spacing:-0.567px;">Graph P</div>
<div style="left:321px;top:616px;width:32px;height:16px;background:#fbe3fb;border:1px solid #e050e0"></div>
<div style="left:323px;top:618px;width:28px;height:12px;background:#f8c8f8;border:1px solid #ec7cec"></div>
<svg style="left:321px;top:616px" width="32" height="16" viewBox="0 0 32 16"><path d="M4 4.500l4 3.500-4 3.500z" fill="#000"/><path d="M11 4.500h-2v7h2" fill="none" stroke="#a040a0" stroke-width="1"/><path d="M26 4.500h2v7h-2" fill="none" stroke="#a040a0" stroke-width="1"/><rect x="12" y="6" width="4" height="2" fill="#c030c0"/><rect x="17" y="5" width="3" height="1" fill="#c030c0"/><rect x="15" y="9" width="5" height="2.500" fill="#c030c0"/><rect x="22" y="4.500" width="2" height="2" fill="#c030c0"/><rect x="22.500" y="8.500" width="2" height="2.500" fill="none" stroke="#c030c0"/></svg>
<div class="t" style="left:319px;top:639.0px;font-size:11px;line-height:11px;color:#000;letter-spacing:-0.339px;">Graph T rF</div>
<div style="left:318px;top:651px;width:32px;height:16px;background:#fbe3fb;border:1px solid #e050e0"></div>
<div style="left:320px;top:653px;width:28px;height:12px;background:#f8c8f8;border:1px solid #ec7cec"></div>
<svg style="left:318px;top:651px" width="32" height="16" viewBox="0 0 32 16"><path d="M4 4.500l4 3.500-4 3.500z" fill="#000"/><path d="M11 4.500h-2v7h2" fill="none" stroke="#a040a0" stroke-width="1"/><path d="M26 4.500h2v7h-2" fill="none" stroke="#a040a0" stroke-width="1"/><rect x="12" y="6" width="4" height="2" fill="#c030c0"/><rect x="17" y="5" width="3" height="1" fill="#c030c0"/><rect x="15" y="9" width="5" height="2.500" fill="#c030c0"/><rect x="22" y="4.500" width="2" height="2" fill="#c030c0"/><rect x="22.500" y="8.500" width="2" height="2.500" fill="none" stroke="#c030c0"/></svg>
<div class="t" style="left:317px;top:673.0px;font-size:11px;line-height:11px;color:#000;letter-spacing:-0.210px;">Graph Prüflingkonf1 Signal</div>
<div style="left:317px;top:685px;width:32px;height:16px;background:#fbe3fb;border:1px solid #e050e0"></div>
<div style="left:319px;top:687px;width:28px;height:12px;background:#f8c8f8;border:1px solid #ec7cec"></div>
<svg style="left:317px;top:685px" width="32" height="16" viewBox="0 0 32 16"><path d="M4 4.500l4 3.500-4 3.500z" fill="#000"/><path d="M11 4.500h-2v7h2" fill="none" stroke="#a040a0" stroke-width="1"/><path d="M26 4.500h2v7h-2" fill="none" stroke="#a040a0" stroke-width="1"/><rect x="12" y="6" width="4" height="2" fill="#c030c0"/><rect x="17" y="5" width="3" height="1" fill="#c030c0"/><rect x="15" y="9" width="5" height="2.500" fill="#c030c0"/><rect x="22" y="4.500" width="2" height="2" fill="#c030c0"/><rect x="22.500" y="8.500" width="2" height="2.500" fill="none" stroke="#c030c0"/></svg>
<div class="t" style="left:316px;top:707.0px;font-size:11px;line-height:11px;color:#000;letter-spacing:-0.157px;">Graph Prüflingkonf1 Fehler</div>
<div style="left:316px;top:719px;width:32px;height:16px;background:#fbe3fb;border:1px solid #e050e0"></div>
<div style="left:318px;top:721px;width:28px;height:12px;background:#f8c8f8;border:1px solid #ec7cec"></div>
<svg style="left:316px;top:719px" width="32" height="16" viewBox="0 0 32 16"><path d="M4 4.500l4 3.500-4 3.500z" fill="#000"/><path d="M11 4.500h-2v7h2" fill="none" stroke="#a040a0" stroke-width="1"/><path d="M26 4.500h2v7h-2" fill="none" stroke="#a040a0" stroke-width="1"/><rect x="12" y="6" width="4" height="2" fill="#c030c0"/><rect x="17" y="5" width="3" height="1" fill="#c030c0"/><rect x="15" y="9" width="5" height="2.500" fill="#c030c0"/><rect x="22" y="4.500" width="2" height="2" fill="#c030c0"/><rect x="22.500" y="8.500" width="2" height="2.500" fill="none" stroke="#c030c0"/></svg>
<div class="t" style="left:717px;top:537.0px;font-size:11px;line-height:11px;color:#000;">Graph P</div>
<div style="left:716px;top:549px;width:110px;height:40px;background:#fff;border:1px solid #000"></div>
<div style="left:716px;top:558px;width:110px;height:1px;background:#000;"></div>
<div style="left:717px;top:550px;width:108px;height:8px;background:#ffffd2;"></div>
<div style="left:729px;top:551px;width:83px;height:5px;background:#f018e8;"></div>
<svg style="left:719px;top:550px" width="7" height="8" viewBox="0 0 7 8"><path d="M0 1h2.500v2.500h-1.500v1.500M1 6.500v1M5 0v5M5 6.500v1" fill="none" stroke="#000" stroke-width="1.200"/></svg>
<svg style="left:817px;top:550px" width="7" height="8" viewBox="0 0 7 8"><path d="M0 1h2.500v2.500h-1.500v1.500M1 6.500v1M5 0v5M5 6.500v1" fill="none" stroke="#000" stroke-width="1.200"/></svg>
<div class="t" style="left:722px;top:560.5px;font-size:11px;line-height:11px;color:#c81ec8;letter-spacing:-0.272px;">YScale.NameLbl.Text</div>
<svg style="left:717px;top:561px" width="5" height="9"><path d="M.5 .5l4 4-4 4z" fill="#000"/></svg>
<div style="left:716px;top:573px;width:110px;height:1px;background:#000;"></div>
<div class="t" style="left:743px;top:575.5px;font-size:11px;line-height:11px;color:#7c3c14;letter-spacing:-0.383px;">PlotAreaSize</div>
<svg style="left:717px;top:576px" width="5" height="9"><path d="M.5 .5l4 4-4 4z" fill="#000"/></svg>
<div class="t" style="left:715px;top:678.0px;font-size:11px;line-height:11px;color:#000;">Graph T rF</div>
<div style="left:714px;top:690px;width:110px;height:115px;background:#fff;border:1px solid #000"></div>
<div style="left:714px;top:699px;width:110px;height:1px;background:#000;"></div>
<div style="left:715px;top:691px;width:108px;height:8px;background:#ffffd2;"></div>
<div style="left:727px;top:692px;width:83px;height:5px;background:#f018e8;"></div>
<svg style="left:717px;top:691px" width="7" height="8" viewBox="0 0 7 8"><path d="M0 1h2.500v2.500h-1.500v1.500M1 6.500v1M5 0v5M5 6.500v1" fill="none" stroke="#000" stroke-width="1.200"/></svg>
<svg style="left:815px;top:691px" width="7" height="8" viewBox="0 0 7 8"><path d="M0 1h2.500v2.500h-1.500v1.500M1 6.500v1M5 0v5M5 6.500v1" fill="none" stroke="#000" stroke-width="1.200"/></svg>
<div class="t" style="left:753px;top:701.5px;font-size:11px;line-height:11px;color:#1a1a9c;letter-spacing:-0.645px;">ActYScl</div>
<svg style="left:715px;top:702px" width="5" height="9"><path d="M.5 .5l4 4-4 4z" fill="#000"/></svg>
<div style="left:714px;top:714px;width:110px;height:1px;background:#000;"></div>
<div class="t" style="left:720px;top:716.5px;font-size:11px;line-height:11px;color:#c81ec8;letter-spacing:-0.272px;">YScale.NameLbl.Text</div>
<svg style="left:715px;top:717px" width="5" height="9"><path d="M.5 .5l4 4-4 4z" fill="#000"/></svg>
<div style="left:714px;top:729px;width:110px;height:1px;background:#000;"></div>
<div class="t" style="left:753px;top:731.5px;font-size:11px;line-height:11px;color:#1a1a9c;letter-spacing:-0.645px;">ActYScl</div>
<svg style="left:715px;top:732px" width="5" height="9"><path d="M.5 .5l4 4-4 4z" fill="#000"/></svg>
<div style="left:714px;top:744px;width:110px;height:1px;background:#000;"></div>
<div class="t" style="left:720px;top:746.5px;font-size:11px;line-height:11px;color:#c81ec8;letter-spacing:-0.272px;">YScale.NameLbl.Text</div>
<svg style="left:715px;top:747px" width="5" height="9"><path d="M.5 .5l4 4-4 4z" fill="#000"/></svg>
<div style="left:714px;top:759px;width:110px;height:1px;background:#000;"></div>
<div class="t" style="left:740px;top:761.5px;font-size:11px;line-height:11px;color:#7c3c14;letter-spacing:-0.299px;">PlotAreaSize</div>
<svg style="left:715px;top:762px" width="5" height="9"><path d="M.5 .5l4 4-4 4z" fill="#000"/></svg>
<div style="left:714px;top:774px;width:110px;height:1px;background:#000;"></div>
<div class="t" style="left:733px;top:776.5px;font-size:11px;line-height:11px;color:#7c3c14;letter-spacing:-0.361px;">XScale.Range</div>
<svg style="left:817px;top:777px" width="5" height="9"><path d="M.5 .5l4 4-4 4z" fill="#000"/></svg>
<div style="left:714px;top:789px;width:110px;height:1px;background:#000;"></div>
<div class="t" style="left:728px;top:791.5px;font-size:11px;line-height:11px;color:#7c3c14;letter-spacing:-0.191px;">Container Bounds</div>
<svg style="left:715px;top:792px" width="5" height="9"><path d="M.5 .5l4 4-4 4z" fill="#000"/></svg>
<div style="left:625px;top:559px;width:71px;height:17px;background:#fff;border:2px solid #f028f0;border-left-width:3px"></div>
<div style="left:628px;top:561px;width:66px;height:13px;border:1px solid #f8b4f8"></div>
<div class="t" style="left:630px;top:563.0px;font-size:11px;line-height:11px;color:#000;letter-spacing:-0.164px;">Druck [mbar]</div>
<svg style="left:696px;top:565px" width="20" height="4"><polyline points="0.5,2.4 1.5,2.5 2.5,0.6 3.5,0.5 4.5,2.4 5.5,2.5 6.5,0.6 7.5,0.5 8.5,2.4 9.5,2.5 10.5,0.6 11.5,0.5 12.5,2.4 13.5,2.5 14.5,0.6 15.5,0.5 16.5,2.4 17.5,2.5 18.5,0.6 19.5,0.5" fill="none" stroke="#f028f0" stroke-width="1.100"/></svg>
<div style="left:624px;top:578px;width:31px;height:40px;background:#fff;border:1px solid #9a5020"></div>
<div style="left:626px;top:580px;width:27px;height:36px;background:#fbefe4;border:1px solid #9a5020"></div>
<div style="left:626px;top:580px;width:27px;height:36px;background:#10108c;"></div>
<div style="left:627px;top:581px;width:25px;height:17px;background:#fff;border:2px solid #1818cc"></div>
<div class="t" style="left:630px;top:584.5px;font-size:11px;line-height:11px;color:#000;letter-spacing:-0.120px;">450</div>
<div style="left:627px;top:598px;width:25px;height:17px;background:#fff;border:2px solid #1818cc"></div>
<div class="t" style="left:630px;top:601.5px;font-size:11px;line-height:11px;color:#000;letter-spacing:-0.120px;">150</div>
<div style="left:627px;top:597px;width:25px;height:3px;background:#1818cc;"></div>
<div style="left:655px;top:597px;width:50px;height:3px;background:repeating-linear-gradient(90deg,#9a5020 0,#9a5020 1px,#fff 1px,#fff 2px);border-top:1px solid #9a5020;border-bottom:1px solid #9a5020"></div>
<div style="left:704px;top:579px;width:3px;height:188px;background:repeating-linear-gradient(180deg,#9a5020 0,#9a5020 1px,#fff 1px,#fff 2px);border-left:1px solid #9a5020;border-right:1px solid #9a5020"></div>
<div style="left:705px;top:579px;width:11px;height:3px;background:repeating-linear-gradient(90deg,#9a5020 0,#9a5020 1px,#fff 1px,#fff 2px);border-top:1px solid #9a5020;border-bottom:1px solid #9a5020"></div>
<div style="left:705px;top:765px;width:9px;height:3px;background:repeating-linear-gradient(90deg,#9a5020 0,#9a5020 1px,#fff 1px,#fff 2px);border-top:1px solid #9a5020;border-bottom:1px solid #9a5020"></div>
<svg style="left:701px;top:594px" width="9" height="9"><circle cx="4.500" cy="4.500" r="2.800" fill="#d8a880" stroke="#9a5020" stroke-width="1.600"/></svg>
<div style="left:675px;top:697px;width:13px;height:17px;background:#fff;border:2px solid #1818cc"></div>
<div class="t" style="left:678px;top:700.5px;font-size:11px;line-height:11px;color:#000;letter-spacing:-0.125px;">0</div>
<div style="left:675px;top:731px;width:13px;height:17px;background:#fff;border:2px solid #1818cc"></div>
<div class="t" style="left:678px;top:734.5px;font-size:11px;line-height:11px;color:#000;letter-spacing:-0.125px;">1</div>
<div style="left:688px;top:705px;width:26px;height:1px;background:#1818cc;"></div>
<div style="left:688px;top:739px;width:7px;height:1px;background:#1818cc;"></div>
<div style="left:694px;top:736px;width:1px;height:4px;background:#1818cc;"></div>
<div style="left:694px;top:736px;width:20px;height:1px;background:#1818cc;"></div>
<div style="left:614px;top:714px;width:74px;height:17px;background:#fff;border:2px solid #f028f0;border-left-width:3px"></div>
<div style="left:617px;top:716px;width:69px;height:13px;border:1px solid #f8b4f8"></div>
<div class="t" style="left:619px;top:718.0px;font-size:11px;line-height:11px;color:#000;letter-spacing:-0.223px;">Spannung [V]</div>
<svg style="left:688px;top:720px" width="26" height="4"><polyline points="0.5,2.4 1.5,2.5 2.5,0.6 3.5,0.5 4.5,2.4 5.5,2.5 6.5,0.6 7.5,0.5 8.5,2.4 9.5,2.5 10.5,0.6 11.5,0.5 12.5,2.4 13.5,2.5 14.5,0.6 15.5,0.5 16.5,2.4 17.5,2.5 18.5,0.6 19.5,0.5 20.5,2.4 21.5,2.5 22.5,0.6 23.5,0.5 24.5,2.4 25.5,2.5" fill="none" stroke="#f028f0" stroke-width="1.100"/></svg>
<div style="left:600px;top:748px;width:88px;height:17px;background:#fff;border:2px solid #f028f0;border-left-width:3px"></div>
<div style="left:603px;top:750px;width:83px;height:13px;border:1px solid #f8b4f8"></div>
<div class="t" style="left:605px;top:752.0px;font-size:11px;line-height:11px;color:#000;letter-spacing:0.056px;">Temperatur [°C]</div>
<svg style="left:688px;top:755px" width="7" height="4"><polyline points="0.5,2.4 1.5,2.5 2.5,0.6 3.5,0.5 4.5,2.4 5.5,2.5 6.5,0.6" fill="none" stroke="#f028f0" stroke-width="1.100"/></svg>
<div style="left:694px;top:751px;width:1px;height:5px;background:#f028f0;"></div>
<svg style="left:694px;top:750px" width="20" height="4"><polyline points="0.5,2.4 1.5,2.5 2.5,0.6 3.5,0.5 4.5,2.4 5.5,2.5 6.5,0.6 7.5,0.5 8.5,2.4 9.5,2.5 10.5,0.6 11.5,0.5 12.5,2.4 13.5,2.5 14.5,0.6 15.5,0.5 16.5,2.4 17.5,2.5 18.5,0.6 19.5,0.5" fill="none" stroke="#f028f0" stroke-width="1.100"/></svg>
<div class="t" style="left:581px;top:775.5px;font-size:11px;line-height:11px;color:#000;letter-spacing:-0.157px;">XControl:Container Bounds</div>
<div style="left:581px;top:788px;width:32px;height:16px;background:#fff;border:2px solid #a2562a"></div>
<div style="left:584px;top:791px;width:26px;height:10px;background:#fff;border:1px solid #a86840"></div>
<div style="left:603px;top:792px;width:6px;height:8px;background:#e6c4bc;"></div>
<svg style="left:581px;top:788px" width="32" height="16"><path d="M24 4l4 4-4 4z" fill="#000"/><g transform="translate(9,0)" fill="none" stroke="#8a4a22" stroke-width="1"><rect x=".5" y="6.500" width="4" height="2"/><path d="M1 10.500h3"/><rect x="6.500" y="6.500" width="2" height="4"/><path d="M10 5.500h3"/><rect x="10.500" y="7.500" width="2" height="3"/></g></svg>
<div style="left:613px;top:795px;width:101px;height:3px;background:repeating-linear-gradient(90deg,#9a5020 0,#9a5020 1px,#fff 1px,#fff 2px);border-top:1px solid #9a5020;border-bottom:1px solid #9a5020"></div>
<div class="t" style="left:833px;top:760.5px;font-size:11px;line-height:11px;color:#000;letter-spacing:-0.415px;">X Scale.Range</div>
<div style="left:832px;top:773px;width:32px;height:16px;background:#f9e2cf;border:1px solid #a2562a"></div>
<div style="left:835px;top:776px;width:26px;height:10px;background:#fff;border:1px solid #a2562a"></div>
<div style="left:836px;top:777px;width:7px;height:8px;background:#e6c4bc;"></div>
<svg style="left:832px;top:773px" width="32" height="16"><path d="M5 4l4 4-4 4z" fill="#000"/><g transform="translate(13,0)" fill="none" stroke="#8a4a22" stroke-width="1"><rect x=".5" y="6.500" width="4" height="2"/><path d="M1 10.500h3"/><rect x="6.500" y="6.500" width="2" height="4"/><path d="M10 5.500h3"/><rect x="10.500" y="7.500" width="2" height="3"/></g></svg>
<div style="left:824px;top:780px;width:8px;height:3px;background:repeating-linear-gradient(90deg,#9a5020 0,#9a5020 1px,#fff 1px,#fff 2px);border-top:1px solid #9a5020;border-bottom:1px solid #9a5020"></div>
<div class="dlgtitle" style="left:913px;top:560px;width:340px;height:29px;"></div>
<div style="left:913px;top:589px;width:3px;height:240px;background:#0a48dc;"></div>
<div style="left:913px;top:827px;width:340px;height:3px;background:#0a32b8;"></div>
<div style="left:916px;top:589px;width:332px;height:238px;background:#ece9d8;"></div>
<div style="left:916px;top:589px;width:1px;height:238px;background:#d6e2f2;"></div>
<svg style="left:919px;top:567px" width="16" height="14" viewBox="0 0 16 14"><rect x="2" y="1" width="12" height="12" fill="#55553f"/><rect x="2.500" y="3" width="11" height="8" fill="#e6d21e"/><path d="M8 3.500h5.500v7h-5.500z" fill="#1c5c1c"/><path d="M4 3.500l7 3.500-7 3.500z" fill="#f2e21a" stroke="#3a3200" stroke-width=".6"/><circle cx="6.500" cy="7" r="1" fill="#3a3200"/><path d="M0 5h2.500" stroke="#d23" stroke-width="1.200"/><path d="M0 9h2.500" stroke="#23c" stroke-width="1.200"/><path d="M13.500 7h2.500" stroke="#d42" stroke-width="1.200"/><path d="M3 2h1M5 2h1M7 2h1M9 2h1M11 2h1M3 12h1M5 12h1M7 12h1M9 12h1M11 12h1" stroke="#ccc" stroke-width="1"/></svg>
<div style="left:1225px;top:565px;width:21px;height:21px;border:1px solid #fff;border-radius:3px;background:linear-gradient(135deg,#e8956f 0,#d9532c 35%,#c23a14 75%,#b8320c 100%)"></div>
<svg style="left:1225px;top:565px" width="21" height="21"><path d="M6 6l9 9M15 6l-9 9" stroke="#fff" stroke-width="2.200" stroke-linecap="square"/></svg>
<svg style="left:927px;top:599px" width="30" height="30" viewBox="0 0 30 30"><defs><radialGradient id="eg" cx=".4" cy=".3" r=".8"><stop offset="0" stop-color="#f4634a"/><stop offset=".5" stop-color="#d92a12"/><stop offset="1" stop-color="#8e1200"/></radialGradient></defs><circle cx="15" cy="15" r="14" fill="url(#eg)" stroke="#7a1a0c" stroke-width=".8"/><path d="M9 8.500l12 13M21 8.500l-12 13" stroke="#fff" stroke-width="3.600" stroke-linecap="butt"/></svg>
<div class="t" style="left:963px;top:600.5px;font-size:11px;line-height:11px;color:#000;font-weight:bold;letter-spacing:0.359px;">Error 1 occurred at Property Node (arg 7) in XY</div>
<div class="t" style="left:963px;top:614.0px;font-size:11px;line-height:11px;color:#000;font-weight:bold;letter-spacing:0.392px;">Graph_neu.vi</div>
<div class="t" style="left:927px;top:658.0px;font-size:11px;line-height:11px;color:#000;font-weight:bold;letter-spacing:0.343px;">Possible reason(s):</div>
<div class="t" style="left:927px;top:684.0px;font-size:11px;line-height:11px;color:#000;letter-spacing:-0.081px;">LabVIEW:  An input parameter is invalid. For example if the</div>
<div class="t" style="left:927px;top:697.0px;font-size:11px;line-height:11px;color:#000;letter-spacing:-0.010px;">input is a path, the path might contain a character not allowed</div>
<div class="t" style="left:927px;top:710.0px;font-size:11px;line-height:11px;color:#000;letter-spacing:-0.167px;">by the OS such as ? or @.</div>
<div class="t" style="left:927px;top:722.5px;font-size:11px;line-height:11px;color:#000;transform-origin:0 0;transform:scaleX(1.2453);">=========================</div>
<div class="t" style="left:927px;top:736.0px;font-size:11px;line-height:11px;color:#000;letter-spacing:-0.106px;">NI-488:  Command requires GPIB Controller to be Controller-In-</div>
<div class="t" style="left:927px;top:749.0px;font-size:11px;line-height:11px;color:#000;letter-spacing:-0.163px;">Charge.</div>
<div class="t" style="left:927px;top:775.0px;font-size:11px;line-height:11px;color:#000;letter-spacing:-0.073px;">Property Name: </div>
<div class="t" style="left:1006px;top:775.0px;font-size:11px;line-height:11px;color:#000;font-weight:bold;letter-spacing:0.182px;">XControl:Container Bounds</div>
<div class="xpbtn" style="left:1086px;top:794px;width:73px;height:21px;"></div>
<div style="left:1087px;top:795px;width:71px;height:19px;border:2px solid #a9c0ec;border-radius:2px"></div>
<div style="left:1089px;top:797px;width:67px;height:15px;border:1px dotted #000"></div>
<div class="t" style="left:1100px;top:799.5px;font-size:11px;line-height:11px;color:#000;letter-spacing:-0.131px;">Continue</div>
<div class="xpbtn" style="left:1164px;top:794px;width:73px;height:21px;"></div>
<div class="t" style="left:1189px;top:799.5px;font-size:11px;line-height:11px;color:#000;letter-spacing:-0.160px;">Stop</div>
<div style="left:702px;top:703px;width:7px;height:5px;background:#fff;"></div>
<div style="left:702px;top:719px;width:7px;height:5px;background:#fff;"></div>
<div style="left:702px;top:734px;width:7px;height:5px;background:#fff;"></div>
<div style="left:702px;top:749px;width:7px;height:5px;background:#fff;"></div>
<div style="left:704px;top:690px;width:3px;height:77px;background:repeating-linear-gradient(180deg,#9a5020 0,#9a5020 1px,#fff 1px,#fff 2px);border-left:1px solid #9a5020;border-right:1px solid #9a5020"></div>
</body></html>
